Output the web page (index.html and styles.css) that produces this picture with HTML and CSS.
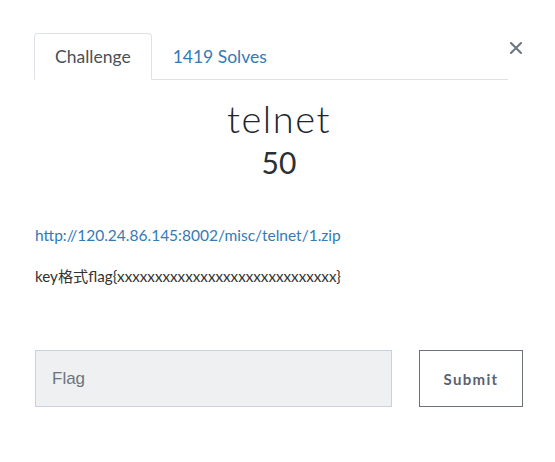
FILE: index.html
```html
<!DOCTYPE html>
<html>
<head>
<meta charset="utf-8">
<link rel="stylesheet" href="styles.css">
</head>
<body>
<div class="modal">
  <div class="head">
    <ul class="tabs">
      <li class="tab active">Challenge</li>
      <li class="tab"><a href="#">1419 Solves</a></li>
    </ul>
    <button class="close" aria-label="Close">
      <svg width="12" height="12" viewBox="0 0 12 12"><path d="M1 1 L11 11 M11 1 L1 11" stroke="#6c757d" stroke-width="2" stroke-linecap="square"/></svg>
    </button>
  </div>
  <h2 class="title">telnet</h2>
  <h3 class="value">50</h3>
  <div class="desc">
    <p><a href="#">http://120.24.86.145:8002/misc/telnet/1.zip</a></p>
    <p>key格式flag{xxxxxxxxxxxxxxxxxxxxxxxxxxxxx}</p>
  </div>
  <form class="flag-row">
    <input class="flag-input" type="text" placeholder="Flag">
    <button class="submit" type="button">Submit</button>
  </form>
</div>
</body>
</html>
```

FILE: styles.css
```css
html, body {
  margin: 0;
  padding: 0;
  background: #fff;
}
body {
  font-family: Lato, "Noto Sans CJK SC", sans-serif;
  color: #212529;
}
.modal {
  width: 555px;
  height: 462px;
  box-sizing: border-box;
  padding: 33px 31px 0 34px;
}
.head {
  display: flex;
  align-items: flex-start;
}
.tabs {
  flex: 1;
  display: flex;
  list-style: none;
  margin: 0;
  padding: 0;
  border-bottom: 1px solid #dee2e6;
}
.tab {
  padding: 10px 20px 10px;
  font-size: 17.5px;
  line-height: 25px;
  border: 1px solid transparent;
  border-radius: 4px 4px 0 0;
  margin-bottom: -1px;
  color: #495057;
}
.tab.active {
  border-color: #dee2e6 #dee2e6 #fff;
  background: #fff;
}
.tab a {
  color: #337ab7;
  text-decoration: none;
}
.close {
  background: none;
  border: 0;
  padding: 0;
  margin-top: 8px;
  width: 16px;
  height: 14px;
  display: flex;
  align-items: center;
  justify-content: center;
}
.title {
  margin: 16px 0 0;
  text-align: center;
  font-weight: 300;
  font-size: 38px;
  line-height: 44px;
  letter-spacing: 1.5px;
  color: #212529;
}
.value {
  margin: 4px 0 0;
  text-align: center;
  font-weight: 400;
  font-size: 30px;
  line-height: 36px;
  color: #2b3035;
}
.desc {
  margin-top: 45px;
  font-size: 15.5px;
  line-height: 20px;
}
.desc p {
  margin: 0 0 21px;
  padding-left: 1px;
}
.desc a {
  color: #337ab7;
  text-decoration: none;
}
.desc p + p {
  font-size: 15.2px;
  color: #333;
}
.flag-row {
  display: flex;
  margin-top: 64px;
  padding-left: 1px;
}
.flag-input {
  width: 357px;
  height: 57px;
  box-sizing: border-box;
  background: #eef0f1;
  border: 1px solid #c8d1dc;
  padding: 0 16px;
  font-family: "Liberation Sans", Arial, sans-serif;
  font-size: 17px;
  color: #495057;
  outline: none;
}
.flag-input::placeholder {
  color: #6c757d;
}
.submit {
  margin-left: 27px;
  width: 104px;
  height: 57px;
  box-sizing: border-box;
  background: #fff;
  border: 1px solid #6c7079;
  font-family: Lato, sans-serif;
  font-weight: 700;
  font-size: 15px;
  letter-spacing: 1.3px;
  color: #5a6270;
}
```
